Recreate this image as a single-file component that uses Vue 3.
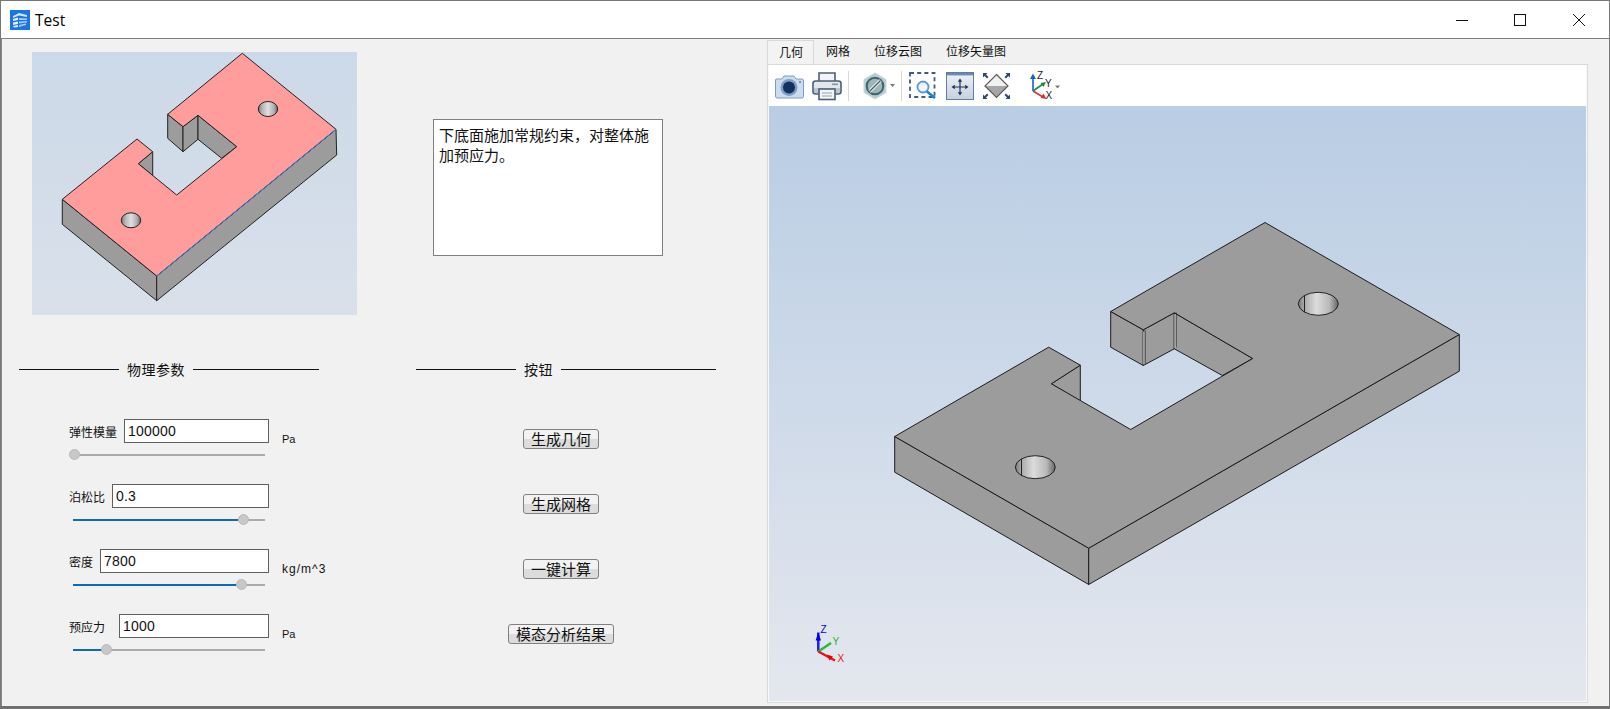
<template>
  <div class="window">
    <div class="titlebar">
      <svg class="app-icon" viewBox="0 0 20 20">
        <rect width="20" height="20" fill="#1a73e8" />
        <path d="M3 6 L9 3 L17 5 L17 7 L9 5.5 L3 8 Z" fill="#d5e6fb" />
        <path d="M3 9 L8 7.5 L8 10 L3 11 Z M3 12.5 L8 11.5 L8 14 L3 15 Z M3 16 L8 15 L8 17 L4 17.5 Z" fill="#e4effc" />
        <path d="M9 8 L17 8.5 L17 10 L9 10 Z M9 11.5 L17 11 L17 12.5 L9 13.5 Z M9 15 L16 13.5 L16 15 L9 17 Z" fill="#a9cbf6" />
      </svg>
      <span class="app-title">Test</span>
      <div class="win-btns">
        <span class="win-btn"><svg width="12" height="12"><path d="M0 6.5 H12" stroke="#111" fill="none" /></svg></span>
        <span class="win-btn"><svg width="12" height="12"><rect x="0.5" y="0.5" width="11" height="11" stroke="#111" fill="none" /></svg></span>
        <span class="win-btn"><svg width="12" height="12"><path d="M0 0 L12 12 M12 0 L0 12" stroke="#111" fill="none" /></svg></span>
      </div>
    </div>

    <div class="body">
      <div class="left">
        <div class="top-row">
          <svg class="preview" viewBox="32 52 325 263">
            <defs>
              <linearGradient id="holeSmall" x1="0" x2="1" y1="0" y2="0">
                <stop offset="0" stop-color="#777" />
                <stop offset="0.2" stop-color="#b5b5b5" />
                <stop offset="0.5" stop-color="#e0e0e0" />
                <stop offset="0.8" stop-color="#b0b0b0" />
                <stop offset="1" stop-color="#666" />
              </linearGradient>
            </defs>
            <g class="edge-small">
              <polygon points="62.3,199.3 62.3,224.3 156.7,300.7 156.7,276" fill="#9c9c9c" />
              <polygon points="156.7,276 156.7,300.7 336.7,155 336,129.3" fill="#9c9c9c" />
              <polygon points="167.7,114.3 167.7,138.3 183,151.7 183,126.7" fill="#9c9c9c" />
              <polygon points="183,126.7 183,151.7 198,139.3 198,115.3" fill="#9c9c9c" />
              <polygon points="198,115.3 198,139.3 221.7,158.3 236.7,146.7" fill="#9c9c9c" />
              <polygon points="138.3,163.7 152.7,151.7 152.7,175.7" fill="#9c9c9c" />
              <polygon points="242.3,53.3 336,129.3 156.7,276 62.3,199.3 137,139 152.7,151.7 138.3,163.7 176.7,195 236.7,146.7 198,115.3 183,126.7 167.7,114.3" fill="#ff9c9c" />
            </g>
            <path d="M156.7 276 L336 129.3" stroke="#3a80d8" fill="none" />
            <ellipse cx="268" cy="109" rx="9.7" ry="7.5" fill="url(#holeSmall)" stroke="#222" />
            <ellipse cx="131" cy="220.3" rx="9.7" ry="7.5" fill="url(#holeSmall)" stroke="#222" />
          </svg>
          <div class="note">下底面施加常规约束，对整体施加预应力。</div>
        </div>

        <div class="bottom-row">
          <section class="group">
            <div class="group-title"><i class="line-short"></i><span>物理参数</span><i class="line-fill"></i></div>
            <div class="form">
              <div v-for="p in params" :key="p.label" class="param">
                <div class="field">
                  <div class="field-top">
                    <label :class="p.cls">{{ p.label }}</label>
                    <input class="num" :value="p.value" />
                  </div>
                  <div class="slider">
                    <div class="slider-fill" :style="{ width: p.pos + 'px' }"></div>
                    <div class="slider-handle" :style="{ left: p.pos - 5.5 + 'px' }"></div>
                  </div>
                </div>
                <span class="unit" :class="{ wide: p.unit.length > 2 }">{{ p.unit }}</span>
              </div>
            </div>
          </section>

          <section class="group">
            <div class="group-title"><i class="line-short"></i><span>按钮</span><i class="line-fill"></i></div>
            <div class="actions">
              <button v-for="b in buttons" :key="b" class="action">{{ b }}</button>
            </div>
          </section>
        </div>
      </div>

      <div class="viewer">
        <div class="tabs">
          <span v-for="(t, i) in tabs" :key="t" class="tab" :class="{ active: i === 0 }">{{ t }}</span>
        </div>
        <div class="panel">
          <div class="toolbar">
            <!-- camera -->
            <svg class="tool t-camera" width="29" height="30" viewBox="0 0 29 30">
              <path d="M1 8 H7 L9 5 H19 L21 8 H27 Q28.5 8 28.5 10 V25 Q28.5 27 27 27 H2 Q0.5 27 0.5 25 V10 Q0.5 8 1 8 Z" fill="#cddcec" stroke="#7d9bc2" />
              <circle cx="14" cy="16.5" r="8.5" fill="#7f9cc4" />
              <circle cx="14" cy="16.5" r="6" fill="#14305f" />
              <circle cx="25" cy="11" r="1" fill="#5d7ba6" />
            </svg>
            <!-- printer -->
            <svg class="tool t-printer" width="30" height="30" viewBox="0 0 30 30">
              <path d="M7 11 V2 H23 V11" fill="#f2f4f7" stroke="#4b6078" stroke-width="1.6" />
              <rect x="1" y="10" width="28" height="13" rx="2.5" fill="#e3e7ec" stroke="#4b6078" stroke-width="1.6" />
              <path d="M2 17 H28 V22 H2 Z" fill="#bcc6d2" />
              <rect x="20" y="12.5" width="6" height="1.6" fill="#8595a8" />
              <rect x="7" y="18" width="16" height="10.5" fill="#f2f4f7" stroke="#4b6078" stroke-width="1.6" />
              <path d="M10 22 H20 M10 25 H20" stroke="#b5bfcb" stroke-width="1.4" />
            </svg>
            <i class="sep sep-a"></i>
            <!-- hex -->
            <svg class="tool t-hex" width="24" height="28" viewBox="0 0 24 28">
              <polygon points="12,1 23,7.5 23,20.5 12,27 1,20.5 1,7.5" fill="#b8cad2" stroke="#c9d6dc" />
              <circle cx="12" cy="14" r="8.3" fill="#9fb5b8" stroke="#3e666c" stroke-width="2" />
              <path d="M6.5 19.5 L17.5 8.5" stroke="#eef3f4" stroke-width="3.2" />
              <path d="M6.5 19.5 L17.5 8.5" stroke="#3e666c" stroke-width="1.5" />
            </svg>
            <svg class="tool t-caret" width="5" height="3" viewBox="0 0 5 3"><path d="M0 0 H5 L2.5 3 Z" fill="#777" /></svg>
            <i class="sep sep-b"></i>
            <!-- zoom box -->
            <svg class="tool t-zoom" width="27" height="27" viewBox="0 0 27 27">
              <rect x="1" y="1" width="24.5" height="24" fill="none" stroke="#3d5a86" stroke-width="1.8" stroke-dasharray="4 3.2" />
              <circle cx="14" cy="15" r="5.5" fill="#f0f6fb" stroke="#5a9ad4" stroke-width="1.8" />
              <path d="M18 19.5 L26 26" stroke="#1f7fd0" stroke-width="2.6" />
            </svg>
            <!-- pan -->
            <svg class="tool t-pan" width="28" height="28" viewBox="0 0 28 28">
              <defs>
                <linearGradient id="panBg" x1="0" x2="0" y1="0" y2="1">
                  <stop offset="0" stop-color="#eef1f6" />
                  <stop offset="1" stop-color="#c6d0df" />
                </linearGradient>
              </defs>
              <rect x="0.5" y="0.5" width="27" height="27" fill="url(#panBg)" stroke="#5f7ea6" />
              <rect x="1" y="1" width="26" height="2.4" fill="#6c8ab0" />
              <path d="M14 8 V22 M7 15 H21" stroke="#1f3555" stroke-width="1.2" />
              <path d="M14 6.5 L11.8 9.8 H16.2 Z M14 23.5 L11.8 20.2 H16.2 Z M5.5 15 L8.8 12.8 V17.2 Z M22.5 15 L19.2 12.8 V17.2 Z" fill="#1f3555" />
            </svg>
            <!-- fit -->
            <svg class="tool t-fit" width="29" height="28" viewBox="0 0 29 28">
              <polygon points="14.5,2.5 26,14 3,14" fill="#f1f1f1" />
              <polygon points="3,14 26,14 14.5,25.5" fill="#a6a6a6" />
              <polygon points="14.5,2.5 26,14 14.5,25.5 3,14" fill="none" stroke="#5b5b5b" stroke-width="1.2" />
              <path d="M1 1 L5.5 1 L4 2.6 L6.5 5 L5 6.5 L2.6 4 L1 5.5 Z M28 1 L23.5 1 L25 2.6 L22.5 5 L24 6.5 L26.4 4 L28 5.5 Z M1 27 L5.5 27 L4 25.4 L6.5 23 L5 21.5 L2.6 24 L1 22.5 Z M28 27 L23.5 27 L25 25.4 L22.5 23 L24 21.5 L26.4 24 L28 22.5 Z" fill="#2f4a70" />
            </svg>
            <!-- axes -->
            <svg class="tool t-axes" width="31" height="30" viewBox="0 0 31 30">
              <path d="M4 20 V6" stroke="#1f5fb8" stroke-width="1.6" fill="none" />
              <path d="M4 2.5 L1 8 H7 Z" fill="#1f5fb8" />
              <path d="M4 20 L14 13" stroke="#1e8a4a" stroke-width="1.6" fill="none" />
              <path d="M17 11 L11.5 12 L14.5 16 Z" fill="#1e8a4a" />
              <path d="M4 20 L14 26" stroke="#d8323c" stroke-width="1.6" fill="none" />
              <path d="M17.5 28 L11.5 27 L14.5 22.5 Z" fill="#d8323c" />
              <text x="8" y="8" class="axis-label">Z</text>
              <text x="16" y="16" class="axis-label">Y</text>
              <text x="16.5" y="28" class="axis-label">X</text>
              <path d="M26 14.5 H31 L28.5 17.5 Z" fill="#777" />
            </svg>
          </div>

          <div class="viewport">
            <svg class="scene" viewBox="769 106 817 594">
              <defs>
                <linearGradient id="holeBig" x1="0" x2="1" y1="0" y2="0">
                  <stop offset="0" stop-color="#777" />
                  <stop offset="0.14" stop-color="#a8a8a8" />
                  <stop offset="0.45" stop-color="#dcdcdc" />
                  <stop offset="0.78" stop-color="#b8b8b8" />
                  <stop offset="1" stop-color="#666" />
                </linearGradient>
              </defs>
              <g class="edge">
                <polygon points="894.7,436 894.7,471.7 1088.7,584 1088.7,547.7" />
                <polygon points="1088.7,547.7 1088.7,584 1459.3,370.7 1459.3,334" />
                <polygon points="1110.7,311 1110.7,346.7 1143.3,365 1143.3,329.3" />
                <polygon points="1143.3,329.3 1143.3,365 1174.3,348.3 1174.3,312.3" />
                <polygon points="1174.3,312.3 1174.3,348.3 1222.3,375 1252.7,358" />
                <polygon points="1051.3,383.3 1080.3,364.7 1080.3,400.7" />
                <polygon points="1265,222 1459.3,334 1088.7,547.7 894.7,436 1048.7,346.7 1080.3,364.7 1051.3,383.3 1130.7,429 1252.7,358 1174.3,312.3 1143.3,329.3 1110.7,311" />
                <path d="M1145 330 V364 M1176 312 V347" fill="none" />
              </g>
              <path class="gap-line" d="M1143.9 331 V364 M1175 313.5 V347.5" />
              <ellipse cx="1035.3" cy="466.7" rx="20" ry="11.5" fill="url(#holeBig)" stroke="#222" />
              <path d="M1021.5 458.5 V475" stroke="#222" fill="none" />
              <ellipse cx="1318.3" cy="303.3" rx="20" ry="11.5" fill="url(#holeBig)" stroke="#222" />
              <path d="M1304.5 295 V311.5" stroke="#222" fill="none" />

              <g>
                <path d="M818.3 651 V632" stroke="#2222ee" stroke-width="2.6" fill="none" />
                <path d="M818.3 632 L815.6 640 H821 Z" fill="#0000ee" />
                <path d="M818.3 651 L831 642.5" stroke="#22bb33" stroke-width="2.4" fill="none" />
                <path d="M818.3 651 L835 660" stroke="#ee1111" stroke-width="2.4" fill="none" />
                <path d="M833 656 L827 654 L829.5 660 Z" fill="#ee0000" />
                <text x="820.5" y="632" class="tri tri-z">Z</text>
                <text x="832.5" y="644" class="tri tri-y">Y</text>
                <text x="837.5" y="661.5" class="tri tri-x">X</text>
              </g>
            </svg>
          </div>
        </div>
      </div>
    </div>
  </div>
</template>

<script setup>
const params = [
  { label: '弹性模量', value: '100000', unit: 'Pa', pos: 1 },
  { label: '泊松比', value: '0.3', unit: '', pos: 170.7 },
  { label: '密度', value: '7800', unit: 'kg/m^3', pos: 168 },
  { label: '预应力', value: '1000', unit: 'Pa', pos: 33, cls: 'extra-gap' }
]
const buttons = ['生成几何', '生成网格', '一键计算', '模态分析结果']
const tabs = ['几何', '网格', '位移云图', '位移矢量图']
</script>

<style>
html,
body {
  margin: 0;
  overflow: hidden;
}
</style>

<style scoped>
.window {
  width: 1610px;
  height: 709px;
  box-sizing: border-box;
  border: 1px solid #777;
  border-bottom: 3px solid #707070;
  display: flex;
  flex-direction: column;
  background: #f1f1f1;
  font-family: "Liberation Sans", "Noto Sans CJK SC", sans-serif;
  color: #111;
}

.titlebar {
  height: 37px;
  flex: none;
  background: #fff;
  border-bottom: 1px solid #808080;
  display: flex;
  align-items: center;
}

.app-icon {
  width: 20px;
  height: 20px;
  margin-left: 9px;
}

.app-title {
  margin-left: 5px;
  font-family: "Open Sans", sans-serif;
  font-size: 15.5px;
  color: #000;
}

.win-btns {
  margin-left: auto;
  margin-right: 1px;
  display: flex;
}

.win-btn {
  width: 58.5px;
  display: flex;
  justify-content: center;
}

.body {
  flex: 1;
  display: flex;
  min-height: 0;
  border-left: 1px solid #8a8a8a;
}

.left {
  width: 765px;
  flex: none;
}

.top-row {
  display: flex;
  padding: 13px 0 0 30px;
}

.preview {
  width: 325px;
  height: 263px;
  display: block;
  background: linear-gradient(#ccd9e8, #d9e0ea);
}

.edge-small polygon {
  stroke: #222;
  stroke-width: 1;
}

.note {
  width: 230px;
  height: 137px;
  box-sizing: border-box;
  margin: 67px 0 0 76px;
  padding: 6px 5px;
  background: #fff;
  border: 1px solid #808080;
  font-size: 15px;
  line-height: 20px;
}

.bottom-row {
  display: flex;
  gap: 97px;
  padding: 44px 0 0 17px;
}

.group {
  width: 300px;
}

.group-title {
  height: 20px;
  display: flex;
  align-items: center;
  gap: 8px;
  font-size: 14px;
  letter-spacing: 0.5px;
}

.line-short {
  width: 100px;
  height: 1px;
  background: #111;
}

.line-fill {
  flex: 1;
  height: 1px;
  background: #111;
}

.form {
  margin: 40px 0 0 50px;
}

.param {
  height: 65px;
  display: flex;
}

.field {
  width: 200px;
  flex: none;
}

.field-top {
  display: flex;
  align-items: center;
  gap: 7px;
  font-size: 12px;
}

.extra-gap {
  margin-right: 7px;
}

.num {
  flex: 1;
  min-width: 0;
  height: 24px;
  box-sizing: border-box;
  padding: 0 3px;
  border: 1px solid #606060;
  background: #fff;
  font-family: "Liberation Sans", sans-serif;
  font-size: 14px;
  letter-spacing: 0.2px;
  color: #111;
  outline: none;
}

.slider {
  position: relative;
  margin: 11px 4px 0;
  height: 2px;
  background: #ababab;
}

.slider-fill {
  height: 2px;
  background: #0f68b8;
}

.slider-handle {
  position: absolute;
  top: -5px;
  width: 11px;
  height: 11px;
  box-sizing: border-box;
  border-radius: 50%;
  background: #c8c8c8;
  border: 1px solid #bababa;
}

.unit {
  margin: 12px 0 0 13px;
  font-size: 11px;
  line-height: 16px;
}

.unit.wide {
  font-size: 12px;
  letter-spacing: 1px;
}

.actions {
  margin-top: 50px;
  padding-right: 10px;
  display: flex;
  flex-direction: column;
  align-items: center;
  gap: 45px;
}

.action {
  height: 20px;
  box-sizing: border-box;
  padding: 0 7px 1px;
  border: 1px solid #808080;
  border-radius: 3px;
  background: linear-gradient(#f2f2f2 50%, #dcdcdc 50%);
  font-family: "Noto Sans CJK SC", sans-serif;
  font-size: 15px;
  line-height: 16px;
  color: #111;
}

.viewer {
  width: 821px;
  flex: none;
  margin-top: 1px;
  display: flex;
  flex-direction: column;
  height: 663px;
}

.tabs {
  height: 24px;
  flex: none;
  display: flex;
  font-size: 12px;
  line-height: 24px;
}

.tab {
  padding: 0 12px;
}

.tab.active {
  padding: 0 10px 0 11px;
  border: 1px solid #d9d9d9;
  border-bottom: none;
  background: #f3f3f3;
  box-sizing: border-box;
}

.panel {
  flex: 1;
  min-height: 0;
  display: flex;
  flex-direction: column;
  border: 1px solid #d9d9d9;
  padding: 0 1px 1px;
  background: #f8f8f8;
}

.toolbar {
  height: 41px;
  flex: none;
  background: #fff;
  display: flex;
  align-items: center;
  padding-left: 6px;
}

.tool {
  flex: none;
  display: block;
}

.t-printer { margin-left: 8px; }
.t-hex { margin-left: 14px; }
.t-caret { margin-left: 3px; }
.t-zoom { margin-left: 7px; }
.t-pan { margin-left: 10px; }
.t-fit { margin-left: 8px; }
.t-axes { margin-left: 18px; }

.sep {
  width: 1px;
  height: 30px;
  background: #d8d8d8;
}

.sep-a { margin-left: 6px; }
.sep-b { margin-left: 6px; }

.axis-label {
  font: 10px "Liberation Sans", sans-serif;
  fill: #222;
}

.viewport {
  flex: 1;
  min-height: 0;
  background: linear-gradient(#b9cde4, #e4e7ee);
}

.scene {
  width: 100%;
  height: 100%;
  display: block;
}

.edge polygon {
  fill: #9c9c9c;
  stroke: #1c1c1c;
  stroke-width: 1;
}

.edge path {
  stroke: #1c1c1c;
}

.gap-line {
  stroke: #e6e6e6;
  stroke-width: 1;
  fill: none;
}

.tri {
  font: 10px "Liberation Sans", sans-serif;
}

.tri-z { fill: #0000ee; }
.tri-y { fill: #22bb33; }
.tri-x { fill: #ee1111; }
</style>
